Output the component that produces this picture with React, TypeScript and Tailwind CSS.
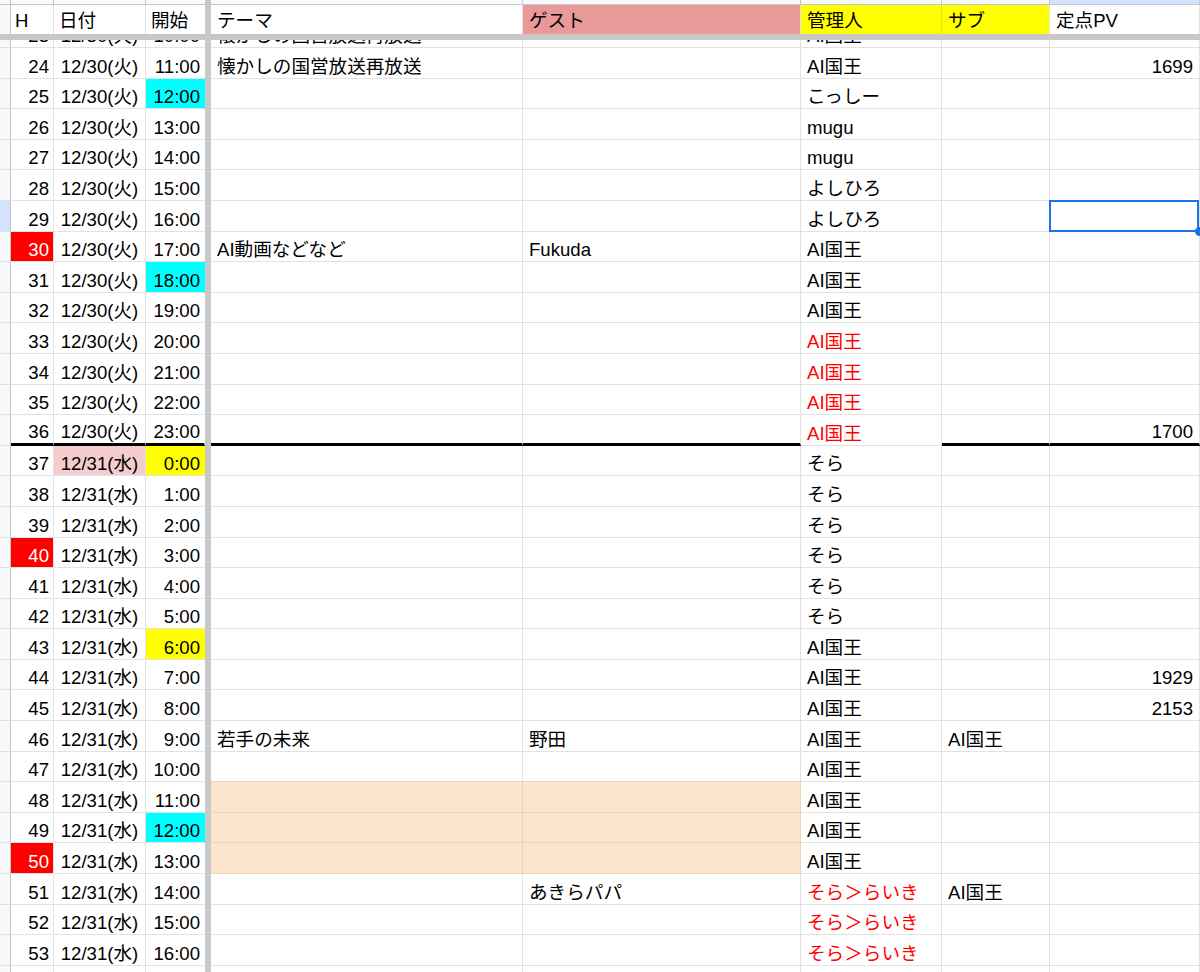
import React from "react";

type Row = {
  n: number;
  t: string;
  theme?: string;
  guest?: string;
  admin?: string;
  adminRed?: boolean;
  sub?: string;
  pv?: string;
  nRed?: boolean;
  tBg?: "cyan" | "yellow";
  dPink?: boolean;
  peach?: boolean;
  peachTop?: boolean;
  thick?: boolean;
  sel?: boolean;
};

const rows: Row[] = [
  { n: 23, t: "10:00", theme: "懐かしの国営放送再放送", admin: "AI国王" },
  { n: 24, t: "11:00", theme: "懐かしの国営放送再放送", admin: "AI国王", pv: "1699" },
  { n: 25, t: "12:00", tBg: "cyan", admin: "こっしー" },
  { n: 26, t: "13:00", admin: "mugu" },
  { n: 27, t: "14:00", admin: "mugu" },
  { n: 28, t: "15:00", admin: "よしひろ" },
  { n: 29, t: "16:00", admin: "よしひろ", sel: true },
  { n: 30, t: "17:00", theme: "AI動画などなど", guest: "Fukuda", admin: "AI国王", nRed: true },
  { n: 31, t: "18:00", tBg: "cyan", admin: "AI国王" },
  { n: 32, t: "19:00", admin: "AI国王" },
  { n: 33, t: "20:00", admin: "AI国王", adminRed: true },
  { n: 34, t: "21:00", admin: "AI国王", adminRed: true },
  { n: 35, t: "22:00", admin: "AI国王", adminRed: true },
  { n: 36, t: "23:00", admin: "AI国王", adminRed: true, pv: "1700", thick: true },
  { n: 37, t: "0:00", tBg: "yellow", dPink: true, admin: "そら" },
  { n: 38, t: "1:00", admin: "そら" },
  { n: 39, t: "2:00", admin: "そら" },
  { n: 40, t: "3:00", admin: "そら", nRed: true },
  { n: 41, t: "4:00", admin: "そら" },
  { n: 42, t: "5:00", admin: "そら" },
  { n: 43, t: "6:00", tBg: "yellow", admin: "AI国王" },
  { n: 44, t: "7:00", admin: "AI国王", pv: "1929" },
  { n: 45, t: "8:00", admin: "AI国王", pv: "2153" },
  { n: 46, t: "9:00", theme: "若手の未来", guest: "野田", admin: "AI国王", sub: "AI国王" },
  { n: 47, t: "10:00", admin: "AI国王", peachTop: true },
  { n: 48, t: "11:00", admin: "AI国王", peach: true },
  { n: 49, t: "12:00", tBg: "cyan", admin: "AI国王", peach: true },
  { n: 50, t: "13:00", admin: "AI国王", peach: true, nRed: true },
  { n: 51, t: "14:00", guest: "あきらパパ", admin: "そら＞らいき", adminRed: true, sub: "AI国王" },
  { n: 52, t: "15:00", admin: "そら＞らいき", adminRed: true },
  { n: 53, t: "16:00", admin: "そら＞らいき", adminRed: true },
  { n: 54, t: "17:00" },
];

const base =
  "relative shrink-0 h-full border-r flex items-end pb-0 whitespace-nowrap leading-[22px]";

function BodyRow({ r }: { r: Row }) {
  const date = r.n <= 36 ? "12/30(火)" : "12/31(水)";
  const gridB = r.thick ? "border-b-[3px] border-b-black" : "border-b border-b-[#e2e2e2]";
  const plainR = "border-r-[#e2e2e2]";
  const peachB = r.peach || r.peachTop ? "border-b border-b-[#ecd2b6]" : gridB;
  return (
    <div className="flex h-[30.6px]">
      <div
        className={`shrink-0 w-[11px] h-full border-r border-r-[#c4c7c5] border-b border-b-[#e2e2e2] ${
          r.sel ? "bg-[#d3e3fd]" : "bg-[#f8f9fa]"
        }`}
      />
      <div
        className={`${base} w-[43px] justify-end pr-[4px] ${plainR} ${gridB} ${
          r.nRed ? "bg-[#ff0000] text-white" : ""
        }`}
      >
        {r.n}
      </div>
      <div
        className={`${base} w-[92px] justify-center ${plainR} ${gridB} ${
          r.dPink ? "bg-[#f4cccc]" : ""
        }`}
      >
        {date}
      </div>
      <div
        className={`${base} w-[59px] justify-end pr-[4px] border-r-transparent ${gridB} ${
          r.tBg === "cyan" ? "bg-[#00ffff]" : r.tBg === "yellow" ? "bg-[#ffff00]" : ""
        }`}
      >
        {r.t}
      </div>
      <div className="shrink-0 w-[6px] h-full bg-[#c8c8c8]" />
      <div
        className={`${base} w-[312px] px-[6px] overflow-hidden ${
          r.peach ? "bg-[#fce5cd] border-r-[#ecd2b6]" : plainR
        } ${r.thick ? gridB : peachB}`}
      >
        {r.theme}
      </div>
      <div
        className={`${base} w-[278px] px-[6px] overflow-hidden ${
          r.peach ? "bg-[#fce5cd] border-r-[#ecd2b6]" : plainR
        } ${r.thick ? gridB : peachB}`}
      >
        {r.guest}
      </div>
      <div
        className={`${base} w-[141px] px-[6px] overflow-hidden ${plainR} border-b border-b-[#e2e2e2] ${
          r.adminRed ? "text-[#ff0000]" : ""
        }`}
      >
        {r.admin}
      </div>
      <div className={`${base} w-[108px] px-[6px] overflow-hidden ${plainR} ${gridB}`}>{r.sub}</div>
      <div className={`${base} w-[150px] justify-end pr-[6px] ${plainR} ${gridB}`}>
        {r.pv}
        {r.sel && (
          <>
            <div className="absolute -left-px -top-px right-0 -bottom-px border-2 border-[#1a73e8] z-10" />
            <div className="absolute -right-[5px] -bottom-[5px] w-[9px] h-[9px] rounded-full bg-[#1a73e8] z-20" />
          </>
        )}
      </div>
    </div>
  );
}

export default function App() {
  const hdr = "shrink-0 h-full border-r border-r-[#e2e2e2] flex items-end pb-[2px] px-[5px] leading-[22px] whitespace-nowrap";
  return (
    <div
      className="w-[1200px] h-[972px] overflow-hidden bg-white text-black text-[18.6px]"
      style={{ fontFamily: '"Liberation Sans", "Noto Sans CJK JP", sans-serif' }}
    >
      {/* column header strip (mostly scrolled out) */}
      <div className="flex h-[5px] border-b border-b-[#c4c7c5]">
        <div className="shrink-0 w-[11px] h-full bg-[#f8f9fa] border-r border-r-[#c4c7c5]" />
        <div className="shrink-0 w-[43px] h-full bg-[#f8f9fa] border-r border-r-[#c4c7c5]" />
        <div className="shrink-0 w-[92px] h-full bg-[#f8f9fa] border-r border-r-[#c4c7c5]" />
        <div className="shrink-0 w-[59px] h-full bg-[#f8f9fa]" />
        <div className="shrink-0 w-[6px] h-full bg-[#c8c8c8]" />
        <div className="shrink-0 w-[312px] h-full bg-[#f8f9fa] border-r border-r-[#c4c7c5]" />
        <div className="shrink-0 w-[278px] h-full bg-[#f8f9fa] border-r border-r-[#c4c7c5]" />
        <div className="shrink-0 w-[141px] h-full bg-[#f8f9fa] border-r border-r-[#c4c7c5]" />
        <div className="shrink-0 w-[108px] h-full bg-[#f8f9fa] border-r border-r-[#c4c7c5]" />
        <div className="shrink-0 w-[150px] h-full bg-[#d3e3fd] border-r border-r-[#c4c7c5]" />
      </div>
      {/* frozen header row */}
      <div className="flex h-[29px]">
        <div className="shrink-0 w-[11px] h-full bg-[#f8f9fa] border-r border-r-[#c4c7c5]" />
        <div className={`${hdr} w-[43px] pl-[4px]`}>H</div>
        <div className={`${hdr} w-[92px]`}>日付</div>
        <div className={`${hdr} w-[59px] border-r-transparent`}>開始</div>
        <div className="shrink-0 w-[6px] h-full bg-[#c8c8c8]" />
        <div className={`${hdr} w-[312px] px-[6px]`}>テーマ</div>
        <div className={`${hdr} w-[278px] px-[6px] bg-[#ea9999]`}>ゲスト</div>
        <div className={`${hdr} w-[141px] px-[6px] bg-[#ffff00] border-r-[#e6e600]`}>管理人</div>
        <div className={`${hdr} w-[108px] px-[6px] bg-[#ffff00]`}>サブ</div>
        <div className={`${hdr} w-[150px] px-[6px]`}>定点PV</div>
      </div>
      {/* freeze bar */}
      <div className="h-[6px] bg-[#c8c8c8]" />
      {/* scrolled body */}
      <div className="h-[932px] overflow-hidden">
        <div className="-mt-[22.6px]">
          {rows.map((r) => (
            <BodyRow key={r.n} r={r} />
          ))}
        </div>
      </div>
    </div>
  );
}
